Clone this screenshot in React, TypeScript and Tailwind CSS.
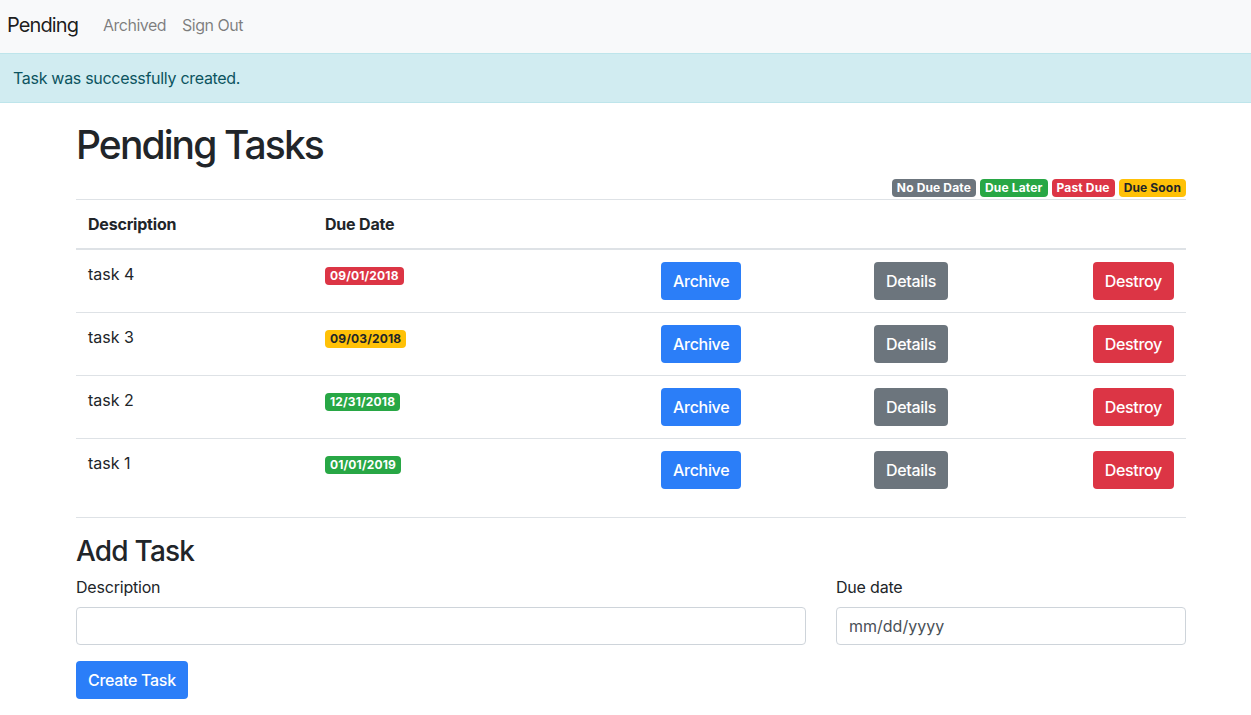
const font = { fontFamily: "Inter, 'Liberation Sans', sans-serif" };

type Task = { name: string; due: string; tone: "danger" | "warning" | "success" };

const tasks: Task[] = [
  { name: "task 4", due: "09/01/2018", tone: "danger" },
  { name: "task 3", due: "09/03/2018", tone: "warning" },
  { name: "task 2", due: "12/31/2018", tone: "success" },
  { name: "task 1", due: "01/01/2019", tone: "success" },
];

const badgeTone = {
  secondary: "bg-[#6c757d] text-white",
  success: "bg-[#28a745] text-white",
  danger: "bg-[#dc3545] text-white",
  warning: "bg-[#ffc107] text-[#212529]",
};

function Badge({ tone, children }: { tone: keyof typeof badgeTone; children: React.ReactNode }) {
  return (
    <span
      className={`inline-block rounded-[4px] px-[5px] py-[3px] text-[12px] font-bold leading-none tracking-[0.15px] ${badgeTone[tone]}`}
    >
      {children}
    </span>
  );
}

function Button({ className, children }: { className: string; children: React.ReactNode }) {
  return (
    <button
      className={`h-[38px] rounded-[4px] px-3 text-[16px] font-medium leading-6 text-white tracking-[-0.3px] ${className}`}
    >
      {children}
    </button>
  );
}

export default function App() {
  return (
    <div className="min-h-[715px] bg-white text-[16px] leading-6 text-[#212529]" style={font}>
      {/* navbar */}
      <nav className="flex h-[53px] items-center bg-[#f8f9fa] pb-[3px] pl-[7px]">
        <span className="mr-[17px] text-[20px] text-[rgba(0,0,0,0.9)] tracking-[-0.9px]">Pending</span>
        <a className="px-2 text-[rgba(0,0,0,0.5)] tracking-[-0.5px]">Archived</a>
        <a className="px-2 text-[rgba(0,0,0,0.5)] tracking-[-0.5px]">Sign Out</a>
      </nav>

      {/* flash */}
      <div className="border-y border-[#bee5eb] bg-[#d1ecf1] px-[13px] py-3 text-[#0c5460] tracking-[-0.3px]">
        Task was successfully created.
      </div>

      <main className="pl-[76px] pr-[65px]">
        <h1 className="mt-[18px] text-[39px] font-medium leading-[48px] tracking-[-1.9px]">Pending Tasks</h1>

        <div className="mt-[10px] flex justify-end gap-1">
          <Badge tone="secondary">No Due Date</Badge>
          <Badge tone="success">Due Later</Badge>
          <Badge tone="danger">Past Due</Badge>
          <Badge tone="warning">Due Soon</Badge>
        </div>

        <table className="mt-[2px] w-full border-collapse">
          <thead>
            <tr className="border-t border-[#dee2e6]">
              <th className="w-[237px] border-b-2 border-[#dee2e6] p-3 text-left font-bold tracking-[-0.2px]">Description</th>
              <th className="w-[336px] border-b-2 border-[#dee2e6] p-3 text-left font-bold tracking-[-0.2px]">Due Date</th>
              <th className="w-[213px] border-b-2 border-[#dee2e6] p-3"></th>
              <th className="w-[218px] border-b-2 border-[#dee2e6] p-3"></th>
              <th className="border-b-2 border-[#dee2e6] p-3"></th>
            </tr>
          </thead>
          <tbody>
            {tasks.map((t, i) => (
              <tr
                key={t.name}
                className={i < tasks.length - 1 ? "border-b border-[#dee2e6] align-top" : "align-top"}
              >
                <td className="p-3">{t.name}</td>
                <td className="p-3">
                  <Badge tone={t.tone}>{t.due}</Badge>
                </td>
                <td className="p-3">
                  <Button className="bg-[#2b7ef8]">Archive</Button>
                </td>
                <td className="p-3">
                  <Button className="bg-[#6c757d]">Details</Button>
                </td>
                <td className="p-3 text-right">
                  <Button className="bg-[#dc3545]">Destroy</Button>
                </td>
              </tr>
            ))}
          </tbody>
        </table>

        <hr className="mt-4 border-t border-[#dee2e6]" />

        <h3 className="mt-[16px] text-[28px] font-medium leading-[34px] tracking-[-0.8px]">Add Task</h3>

        <div className="mt-[7px] grid grid-cols-[730px_350px] gap-x-[30px]">
          <div>
            <label className="block tracking-[-0.2px]">Description</label>
            <input className="mt-2 block h-[38px] w-full rounded-[4px] border border-[#ced4da] px-3" />
          </div>
          <div>
            <label className="block tracking-[-0.2px]">Due date</label>
            <div className="mt-2 flex h-[38px] w-full items-center rounded-[4px] border border-[#ced4da] px-3 text-[#495057]">
              mm/dd/yyyy
            </div>
          </div>
        </div>

        <Button className="mt-4 bg-[#2b7ef8]">Create Task</Button>
      </main>
    </div>
  );
}
